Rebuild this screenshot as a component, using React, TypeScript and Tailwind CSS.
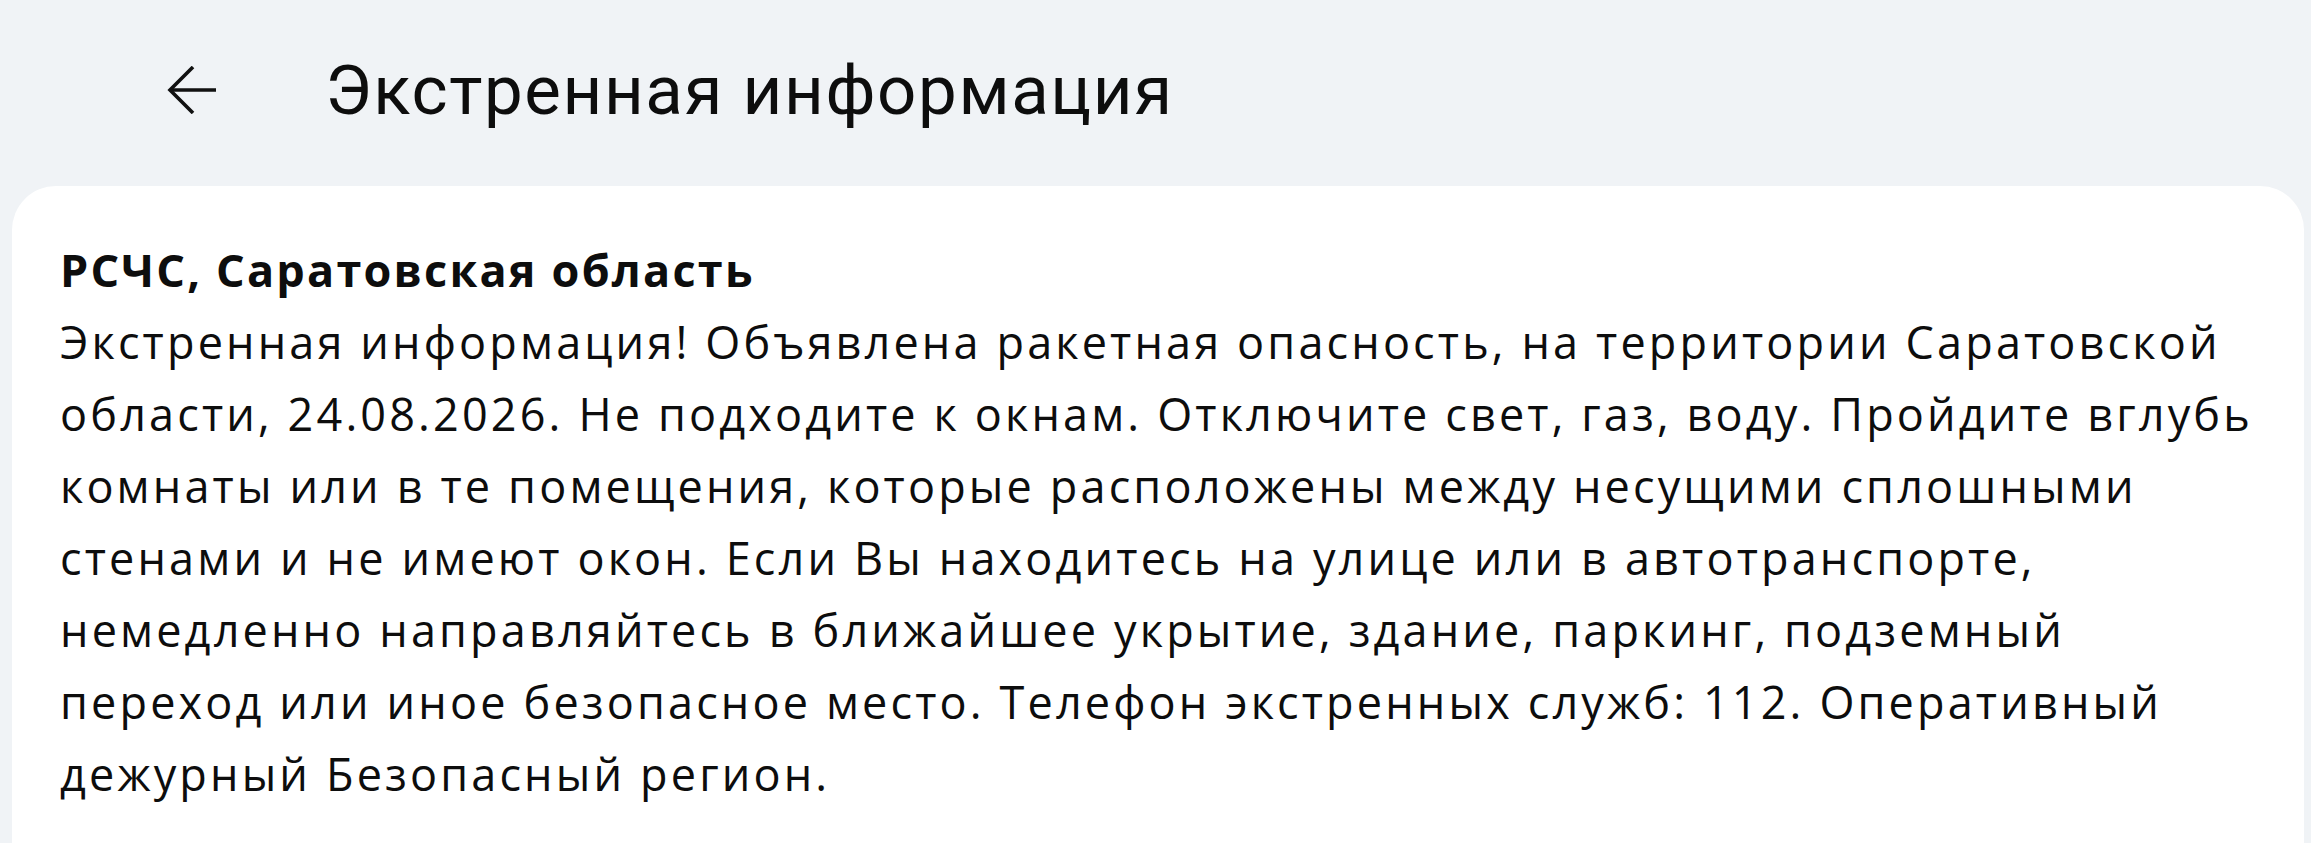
import React from 'react';

const message =
  'Экстренная информация! Объявлена ракетная опасность, на территории Саратовской области, 24.08.2026. Не подходите к окнам. Отключите свет, газ, воду. Пройдите вглубь комнаты или в те помещения, которые расположены между несущими сплошными стенами и не имеют окон. Если Вы находитесь на улице или в автотранспорте, немедленно направляйтесь в ближайшее укрытие, здание, паркинг, подземный переход или иное безопасное место. Телефон экстренных служб: 112. Оперативный дежурный Безопасный регион.';

const BackArrow: React.FC = () => (
  <svg width="50" height="48" viewBox="0 0 50 48" fill="none" stroke="currentColor" strokeWidth="3.6" strokeLinecap="butt" strokeLinejoin="miter">
    <path d="M49 24H3" />
    <path d="M26 1L3 24l23 23" />
  </svg>
);

export default function App() {
  return (
    <div className="min-h-screen w-full overflow-hidden bg-[#f0f3f6] text-[#0d0d0d]">
      <header className="h-[180px] flex items-center pl-[167px]">
        <button className="text-[#111] flex items-center">
          <BackArrow />
        </button>
        <h1 className="ml-[108px] text-[69px] leading-none font-normal tracking-[1.6px] font-['Roboto',sans-serif] text-[#0d0d0d]">
          Экстренная информация
        </h1>
      </header>

      <main className="mt-[6px] ml-[12px] mr-[7px] bg-white rounded-[44px] pl-[48px] pr-[36px] pt-[48px] pb-[80px] font-['Open_Sans',sans-serif] text-[45px] leading-[72px]">
        <h2 className="font-bold tracking-[2.2px]">РСЧС, Саратовская область</h2>
        <p className="font-normal tracking-[3.15px]">{message}</p>
      </main>
    </div>
  );
}
